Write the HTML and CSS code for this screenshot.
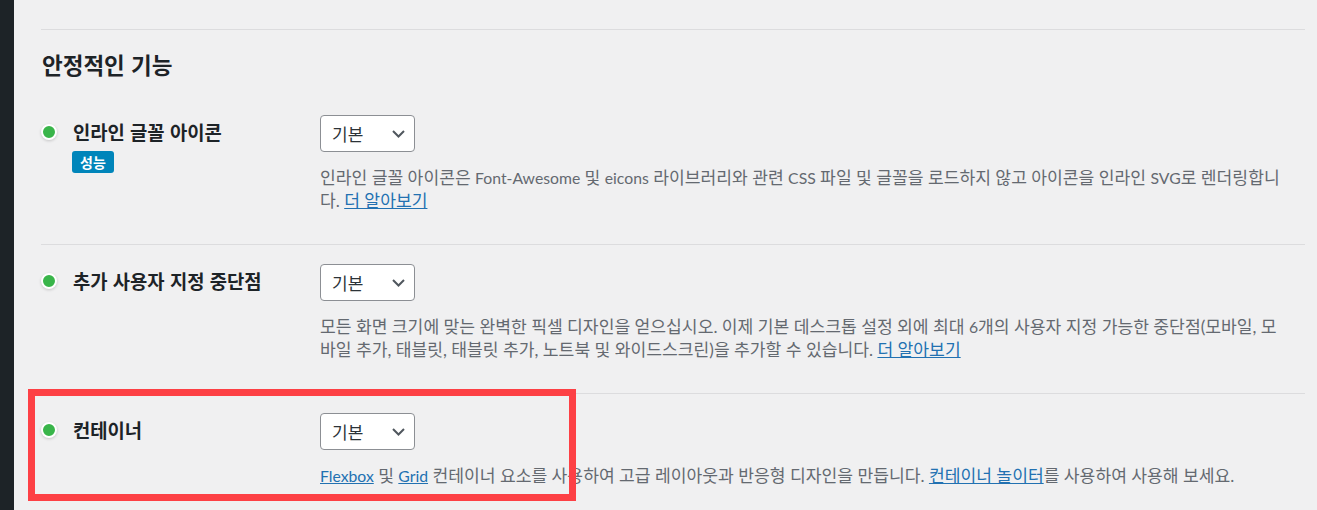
FILE: index.html
```html
<!DOCTYPE html>
<html lang="ko">
<head>
<meta charset="utf-8">
<title>안정적인 기능</title>
<link rel="stylesheet" href="styles.css">
</head>
<body>
<div class="wrap">
  <div class="sidebar"></div>
  <main class="main">
    <section class="section">
      <h2 class="section-title">안정적인 기능</h2>

      <div class="row">
        <div class="row-label">
          <div class="label-line"><span class="dot"></span><span class="label">인라인 글꼴 아이콘</span></div>
          <span class="badge">성능</span>
        </div>
        <div class="row-control">
          <div class="select"><span>기본</span><svg class="chev" width="13" height="8" viewBox="0 0 13 8"><path d="M1 1 L6.5 6.5 L12 1" fill="none" stroke="#50575e" stroke-width="2"/></svg></div>
          <p class="desc">인라인 글꼴 아이콘은 <span class="en">Font-Awesome</span> 및 <span class="en">eicons</span> 라이브러리와 관련 <span class="en">CSS</span> 파일 및 글꼴을 로드하지 않고 아이콘을 인라인 <span class="en">SVG</span>로 렌더링합니다. <a href="#">더 알아보기</a></p>
        </div>
      </div>

      <div class="row">
        <div class="row-label">
          <div class="label-line"><span class="dot"></span><span class="label">추가 사용자 지정 중단점</span></div>
        </div>
        <div class="row-control">
          <div class="select"><span>기본</span><svg class="chev" width="13" height="8" viewBox="0 0 13 8"><path d="M1 1 L6.5 6.5 L12 1" fill="none" stroke="#50575e" stroke-width="2"/></svg></div>
          <p class="desc">모든 화면 크기에 맞는 완벽한 픽셀 디자인을 얻으십시오. 이제 기본 데스크톱 설정 외에 최대 <span class="en">6</span>개의 사용자 지정 가능한 중단점(모바일, 모바일 추가, 태블릿, 태블릿 추가, 노트북 및 와이드스크린)을 추가할 수 있습니다. <a href="#">더 알아보기</a></p>
        </div>
      </div>

      <div class="row">
        <div class="row-label">
          <div class="label-line"><span class="dot"></span><span class="label">컨테이너</span></div>
        </div>
        <div class="row-control">
          <div class="select"><span>기본</span><svg class="chev" width="13" height="8" viewBox="0 0 13 8"><path d="M1 1 L6.5 6.5 L12 1" fill="none" stroke="#50575e" stroke-width="2"/></svg></div>
          <p class="desc"><a href="#" class="en">Flexbox</a> 및 <a href="#" class="en">Grid</a> 컨테이너 요소를 사용하여 고급 레이아웃과 반응형 디자인을 만듭니다. <a href="#">컨테이너 놀이터</a>를 사용하여 사용해 보세요.</p>
        </div>
      </div>
    </section>
  </main>
  <div class="highlight"></div>
</div>
</body>
</html>
```

FILE: styles.css
```css
html, body {
  margin: 0;
  padding: 0;
  background: #f0f0f1;
  height: 510px;
  overflow: hidden;
}

body {
  font-family: "Noto Sans CJK KR", "Noto Sans", sans-serif;
  color: #1d2327;
}

.wrap {
  position: relative;
  display: flex;
  min-height: 510px;
}

.sidebar {
  width: 14px;
  flex: none;
  background: #1d2327;
}

.main {
  flex: 1;
  padding: 29px 12px 0 27px;
}

.section {
  border-top: 1px solid #dcdcde;
}

.section-title {
  margin: 19px 0 17px 1px;
  font-size: 22.5px;
  line-height: 30px;
  font-weight: 600;
  color: #1d2327;
}

.row {
  display: flex;
  padding: 19px 0 32px;
  border-bottom: 1px solid #dcdcde;
}

.row-label {
  width: 279px;
  flex: none;
  padding-top: 5px;
  display: flex;
  flex-direction: column;
  align-items: flex-start;
}

.label-line {
  display: flex;
  align-items: center;
  gap: 16px;
  height: 24px;
}

.dot {
  width: 12px;
  height: 12px;
  border-radius: 50%;
  background: #39b54a;
  border: 2px solid #fff;
  box-shadow: 0 1px 3px rgba(0, 0, 0, 0.18);
  flex: none;
}

.label {
  font-size: 18.8px;
  font-weight: 700;
  line-height: 24px;
  color: #1d2327;
}

.badge {
  margin: 7px 0 0 31px;
  height: 22px;
  line-height: 22px;
  padding: 0 8px;
  border-radius: 3px;
  background: #0085ba;
  color: #fff;
  font-size: 14px;
  font-weight: 700;
}

.row-control {
  flex: 1;
  padding-right: 14px;
}

.select {
  box-sizing: border-box;
  width: 95px;
  height: 37px;
  display: flex;
  align-items: center;
  justify-content: space-between;
  padding: 0 9px 0 11px;
  background: #fff;
  border: 1px solid #8c8f94;
  border-radius: 4px;
  font-size: 17px;
  color: #2c3338;
}

.chev {
  display: block;
}

.desc {
  margin: 15px 0 0;
  font-family: Lato, "Noto Sans CJK KR", sans-serif;
  font-size: 17.15px;
  line-height: 22.5px;
  color: #646970;
}

.desc .en {
  font-size: 15.75px;
}

.desc a {
  color: #2271b1;
  text-decoration: underline;
}

.highlight {
  position: absolute;
  left: 28px;
  top: 389px;
  width: 548px;
  height: 112px;
  box-sizing: border-box;
  border: 7px solid #fd4045;
  pointer-events: none;
}
```
